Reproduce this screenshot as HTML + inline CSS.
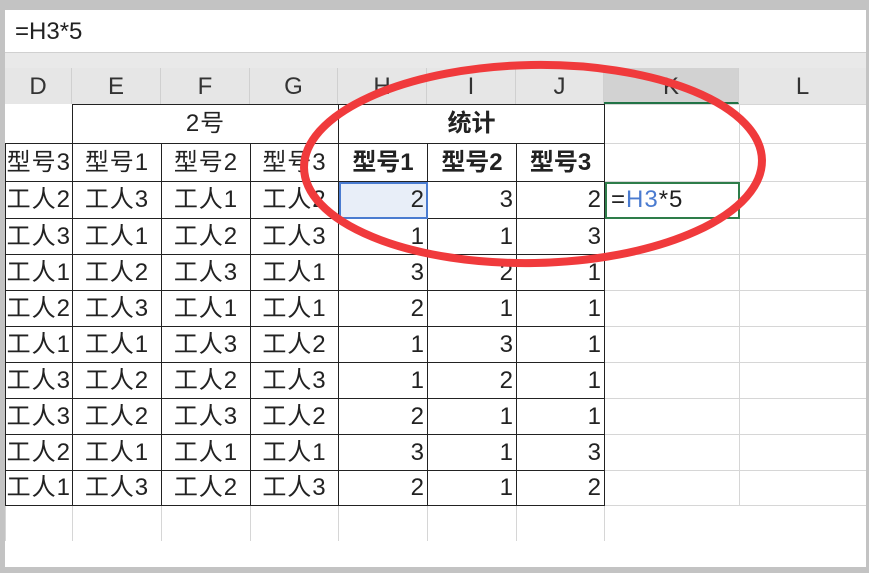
<!DOCTYPE html>
<html><head><meta charset="utf-8"><style>
body{margin:0;width:869px;height:573px;background:#c3c3c3;position:relative;overflow:hidden;font-family:"Liberation Sans","Noto Sans CJK SC",sans-serif;}
#w{position:absolute;left:5px;top:10px;width:861px;height:557px;background:#fff;overflow:hidden}
#fb{position:absolute;left:0;top:0;width:861px;height:42px;border-bottom:1px solid #d0d0d0;font-size:24px;line-height:44px;padding-left:10px;color:#222}
#hdr{position:absolute;left:0;top:43px;width:861px;height:51px;background:#e9e9e9}
.h{position:absolute;top:15px;height:36px;line-height:38px;text-align:center;font-size:24px;color:#333;border-right:1px solid #d0d0d0;background:#e6e6e6}
table{position:absolute;left:0;top:94px;width:861px;border-collapse:collapse;table-layout:fixed}
td{padding:0 2px;font-size:24px;line-height:24px;letter-spacing:1px;color:#222;white-space:nowrap;overflow:hidden;border:1px solid #d6d6d6;text-align:right;box-sizing:border-box}
td.b{border:1px solid #222}
td.c{text-align:center;padding:0}
td.d{direction:rtl;text-align:right;padding:0 1px 0 0}
td.bo{font-weight:bold;letter-spacing:0}
</style></head><body>
<div id="w">
<div id="fb">=H3*5</div>
<div id="hdr">
<div class="h" style="left:0;width:66px">D</div>
<div class="h" style="left:67px;width:88px">E</div>
<div class="h" style="left:156px;width:88px">F</div>
<div class="h" style="left:245px;width:87px">G</div>
<div class="h" style="left:333px;width:88px">H</div>
<div class="h" style="left:422px;width:88px">I</div>
<div class="h" style="left:511px;width:87px">J</div>
<div class="h" style="left:599px;width:134px;background:#d2d2d2;border-bottom:2px solid #217346;height:34px">K</div>
<div class="h" style="left:734px;width:127px">L</div>
</div>
<table>
<colgroup><col style="width:67px"><col style="width:89px"><col style="width:89px"><col style="width:88px"><col style="width:89px"><col style="width:89px"><col style="width:88px"><col style="width:135px"><col style="width:127px"></colgroup>
<tr style="height:39px"><td style="border-color:#fff #222 #222 #fff"></td><td class="b c" colspan="3">2号</td><td class="b c bo" colspan="3">统计</td><td style="border-left:1px solid #222"></td><td></td></tr>
<tr style="height:38px"><td class="b d">型号3</td><td class="b c">型号1</td><td class="b c">型号2</td><td class="b c">型号3</td><td class="b c bo">型号1</td><td class="b c bo">型号2</td><td class="b c bo">型号3</td><td></td><td></td></tr>
<tr style="height:37px"><td class="b d">工人2</td><td class="b c">工人3</td><td class="b c">工人1</td><td class="b c">工人2</td><td class="b" style="background:#e8eef8;outline:2px solid #4a7bd0;outline-offset:-2px">2</td><td class="b">3</td><td class="b">2</td><td style="text-align:left;outline:2px solid #2e7d4a;outline-offset:-2px;padding-left:6px">=<span style="color:#4a7bd0">H3</span>*5</td><td></td></tr>
<tr style="height:36px"><td class="b d">工人3</td><td class="b c">工人1</td><td class="b c">工人2</td><td class="b c">工人3</td><td class="b">1</td><td class="b">1</td><td class="b">3</td><td></td><td></td></tr>
<tr style="height:36px"><td class="b d">工人1</td><td class="b c">工人2</td><td class="b c">工人3</td><td class="b c">工人1</td><td class="b">3</td><td class="b">2</td><td class="b">1</td><td></td><td></td></tr>
<tr style="height:36px"><td class="b d">工人2</td><td class="b c">工人3</td><td class="b c">工人1</td><td class="b c">工人1</td><td class="b">2</td><td class="b">1</td><td class="b">1</td><td></td><td></td></tr>
<tr style="height:36px"><td class="b d">工人1</td><td class="b c">工人1</td><td class="b c">工人3</td><td class="b c">工人2</td><td class="b">1</td><td class="b">3</td><td class="b">1</td><td></td><td></td></tr>
<tr style="height:36px"><td class="b d">工人3</td><td class="b c">工人2</td><td class="b c">工人2</td><td class="b c">工人3</td><td class="b">1</td><td class="b">2</td><td class="b">1</td><td></td><td></td></tr>
<tr style="height:36px"><td class="b d">工人3</td><td class="b c">工人2</td><td class="b c">工人3</td><td class="b c">工人2</td><td class="b">2</td><td class="b">1</td><td class="b">1</td><td></td><td></td></tr>
<tr style="height:36px"><td class="b d">工人2</td><td class="b c">工人1</td><td class="b c">工人1</td><td class="b c">工人1</td><td class="b">3</td><td class="b">1</td><td class="b">3</td><td></td><td></td></tr>
<tr style="height:35px"><td class="b d">工人1</td><td class="b c">工人3</td><td class="b c">工人2</td><td class="b c">工人3</td><td class="b">2</td><td class="b">1</td><td class="b">2</td><td></td><td></td></tr>
<tr style="height:35px"><td style="border-bottom:none"></td><td style="border-bottom:none"></td><td style="border-bottom:none"></td><td style="border-bottom:none"></td><td style="border-bottom:none"></td><td style="border-bottom:none"></td><td style="border-bottom:none"></td><td style="border:none;border-top:1px solid #d6d6d6"></td><td style="border:none;border-top:1px solid #d6d6d6"></td></tr>
</table>
</div>
<svg width="869" height="573" style="position:absolute;left:0;top:0">
<ellipse cx="533" cy="164" rx="229" ry="99" fill="none" stroke="#f03a3c" stroke-width="8" transform="rotate(-1 533 164)"/>
</svg>
</body></html>
